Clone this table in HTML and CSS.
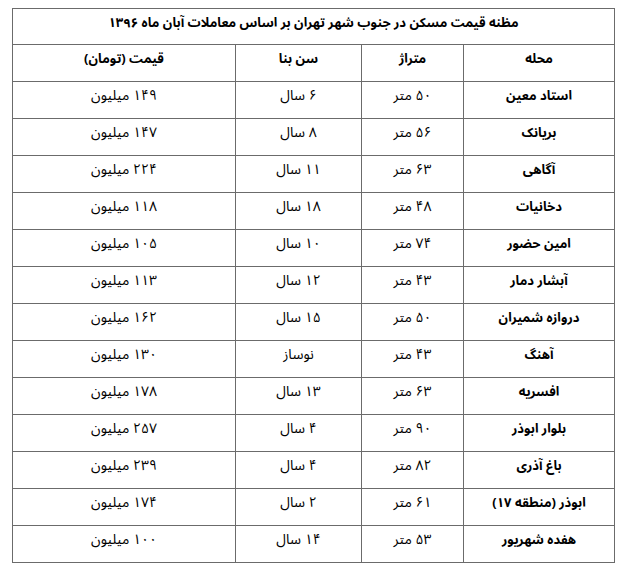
FILE: index.html
```html
<!DOCTYPE html>
<html lang="fa">
<head>
<meta charset="utf-8">
<link rel="stylesheet" href="styles.css">
<title>قیمت مسکن</title>
</head>
<body>
<table class="price-table" dir="rtl">
  <colgroup>
    <col class="c-area"><col class="c-size"><col class="c-age"><col class="c-price">
  </colgroup>
  <thead>
    <tr class="title-row"><th class="title" colspan="4">مظنه قیمت مسکن در جنوب شهر تهران بر اساس معاملات آبان ماه ۱۳۹۶</th></tr>
    <tr class="head"><th>محله</th><th>متراژ</th><th>سن بنا</th><th>قیمت (تومان)</th></tr>
  </thead>
  <tbody>
    <tr><th>استاد معین</th><td>۵۰ متر</td><td>۶ سال</td><td>۱۴۹ میلیون</td></tr>
    <tr><th>بریانک</th><td>۵۶ متر</td><td>۸ سال</td><td>۱۴۷ میلیون</td></tr>
    <tr><th>آگاهی</th><td>۶۳ متر</td><td>۱۱ سال</td><td>۲۲۴ میلیون</td></tr>
    <tr><th>دخانیات</th><td>۴۸ متر</td><td>۱۸ سال</td><td>۱۱۸ میلیون</td></tr>
    <tr><th>امین حضور</th><td>۷۴ متر</td><td>۱۰ سال</td><td>۱۰۵ میلیون</td></tr>
    <tr><th>آبشار دمار</th><td>۴۳ متر</td><td>۱۲ سال</td><td>۱۱۳ میلیون</td></tr>
    <tr><th>دروازه شمیران</th><td>۵۰ متر</td><td>۱۵ سال</td><td>۱۶۲ میلیون</td></tr>
    <tr><th>آهنگ</th><td>۴۳ متر</td><td>نوساز</td><td>۱۳۰ میلیون</td></tr>
    <tr><th>افسریه</th><td>۶۳ متر</td><td>۱۳ سال</td><td>۱۷۸ میلیون</td></tr>
    <tr><th>بلوار ابوذر</th><td>۹۰ متر</td><td>۴ سال</td><td>۲۵۷ میلیون</td></tr>
    <tr><th>باغ آذری</th><td>۸۲ متر</td><td>۴ سال</td><td>۲۳۹ میلیون</td></tr>
    <tr><th>ابوذر (منطقه ۱۷)</th><td>۶۱ متر</td><td>۲ سال</td><td>۱۷۴ میلیون</td></tr>
    <tr><th>هفده شهریور</th><td>۵۳ متر</td><td>۱۴ سال</td><td>۱۰۰ میلیون</td></tr>
  </tbody>
</table>
</body>
</html>
```

FILE: styles.css
```css
html, body {
  margin: 0;
  padding: 0;
  background: #ffffff;
}
body {
  padding: 8px 0 0 12px;
  font-family: "Noto Sans Arabic", "Noto Naskh Arabic", "DejaVu Sans", sans-serif;
  color: #000;
}
.price-table {
  border-collapse: collapse;
  width: 602px;
  table-layout: fixed;
}
.c-area { width: 151px; }
.c-size { width: 102px; }
.c-age { width: 126px; }
.c-price { width: 223px; }
.price-table tr {
  height: 37px;
}
.price-table .title-row {
  height: 36px;
}
.price-table th,
.price-table td {
  border: 1px solid #6b6b6b;
  padding: 0 4px 8px;
  text-align: center;
  vertical-align: middle;
  font-size: 14px;
  line-height: 20px;
}
.price-table td { font-weight: normal; }
.price-table th {
  font-weight: bold;
  font-size: 13px;
}
```
